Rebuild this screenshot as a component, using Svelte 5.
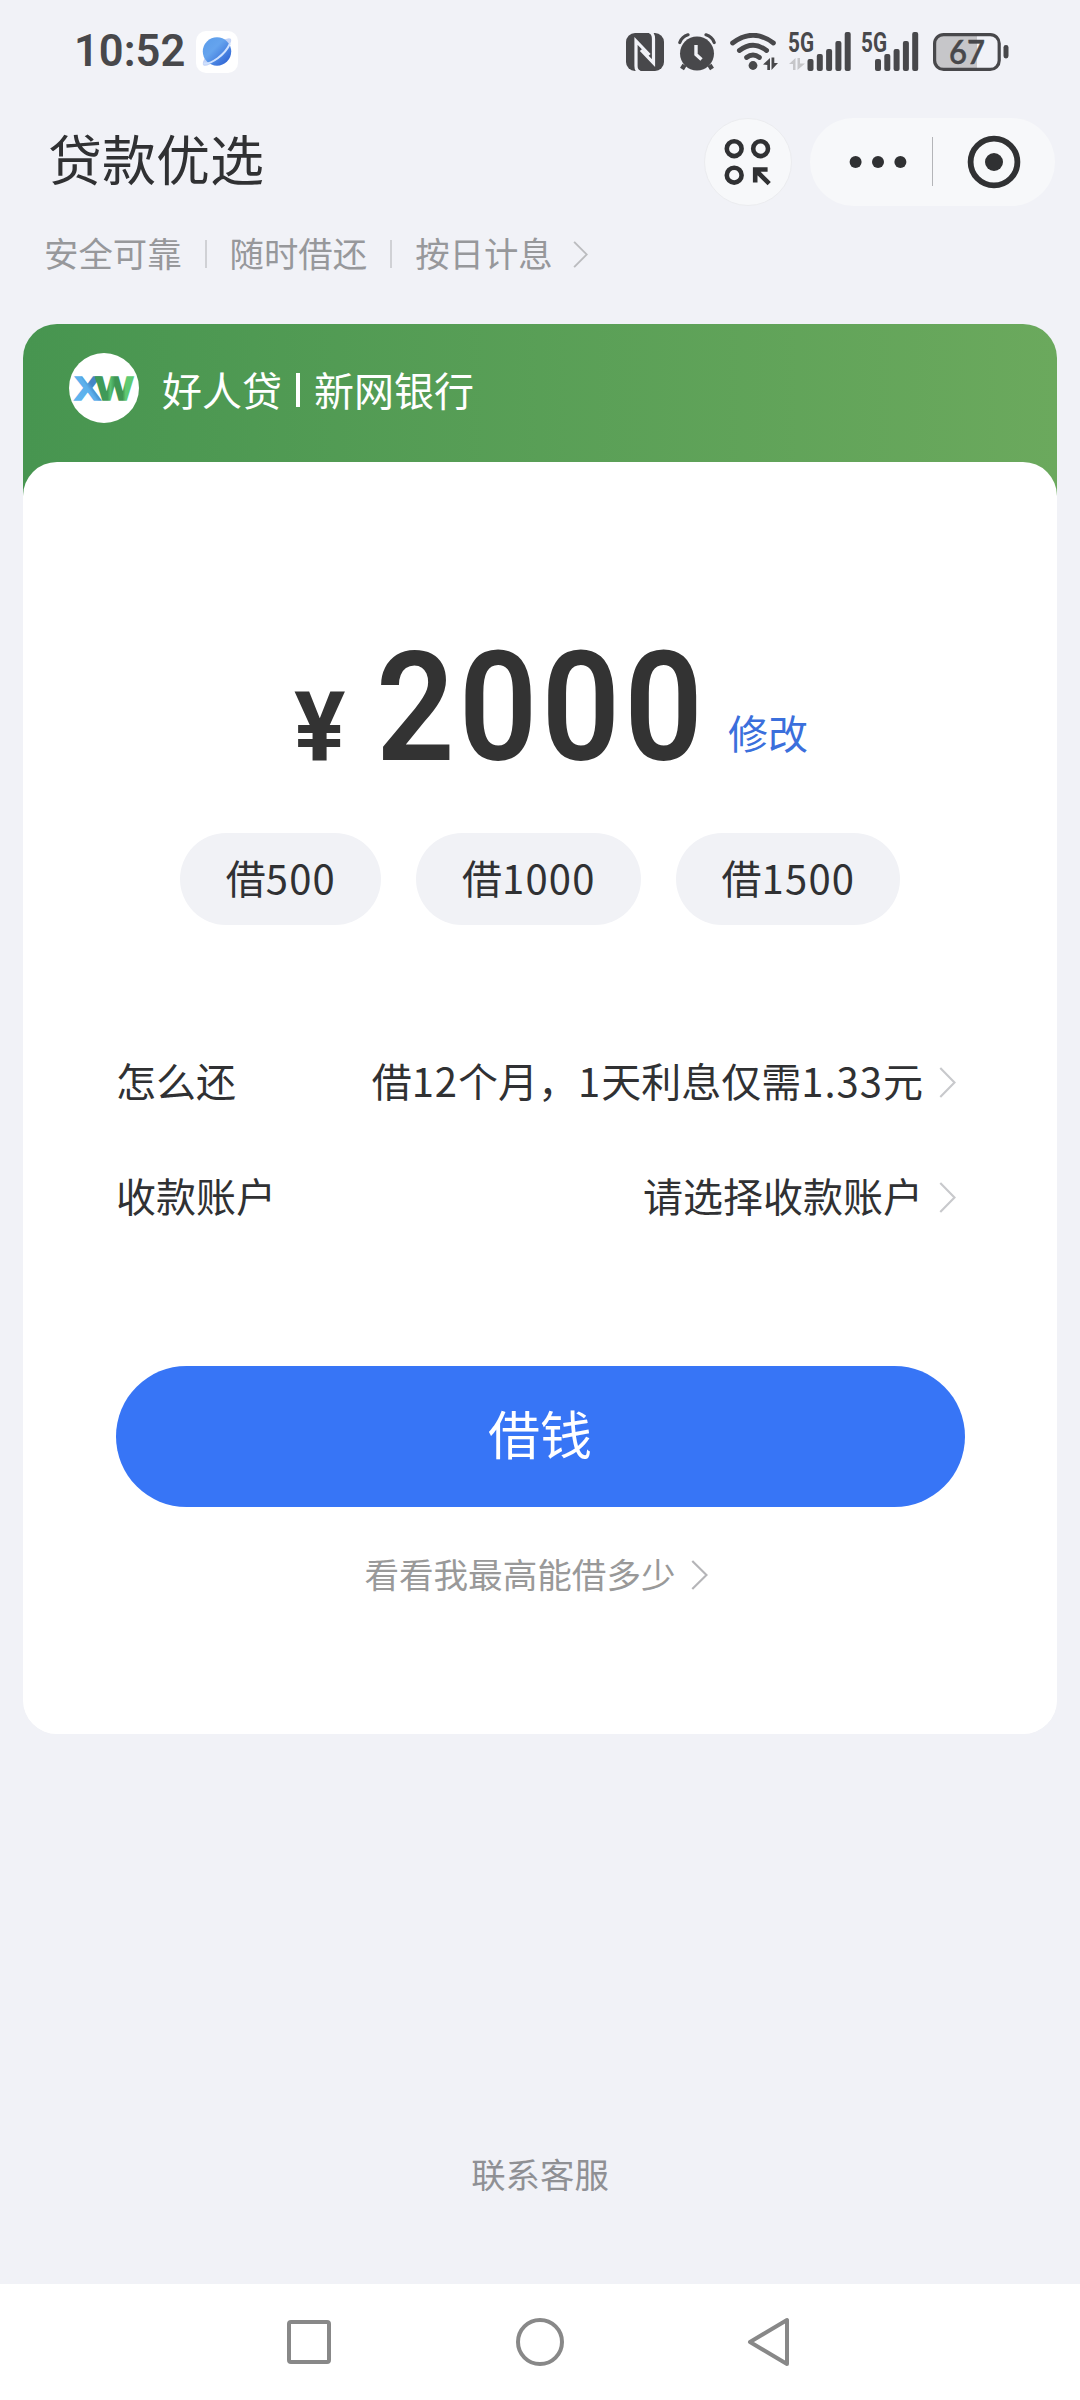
<script>
	const tags = ['安全可靠', '随时借还', '按日计息'];
	const presets = [500, 1000, 1500];
	const bars = [12, 17, 22, 30, 39];

	let amount = $state(2000);
</script>

{#snippet chevron(w, h)}
	<svg class="chevron" width={w} height={h} viewBox="0 0 16 30" preserveAspectRatio="none">
		<path d="M1.2 1 L14.6 15 L1.2 29" />
	</svg>
{/snippet}

{#snippet signal(data)}
	<svg class="signal" width={data ? 62 : 57} height="40" viewBox="0 0 {data ? 62 : 57} 40">
		<text x="-1" y="20" textLength="26" lengthAdjust="spacingAndGlyphs">5G</text>
		{#each bars as h, i}
			<rect x={(data ? 18.5 : 13) + i * 9.3} y={39 - h} width="6" height={h} rx="2" />
		{/each}
		{#if data}
			<path class="faint" d="M0 32 L6.5 26 V38 H4 V32 Z M8.5 26 H11 V31.5 H16 L8.5 38 Z" />
		{/if}
	</svg>
{/snippet}

<div class="screen">
	<div class="status">
		<span class="time">10:52</span>
		<svg class="browser" width="42" height="42" viewBox="0 0 42 42">
			<defs>
				<linearGradient id="globe" x1="0" y1="0" x2="1" y2="1">
					<stop offset="0" stop-color="#5a9bea" />
					<stop offset="0.4" stop-color="#65a4ee" />
					<stop offset="1" stop-color="#2457cf" />
				</linearGradient>
			</defs>
			<rect width="42" height="42" rx="10" fill="#fff" />
			<ellipse cx="21" cy="21" rx="19" ry="5.5" transform="rotate(-44 21 21)" fill="#c3d3f6" />
			<circle cx="21" cy="20.5" r="14.2" fill="url(#globe)" />
			<path d="M7.5 32.5 C15 33.5 29 24 34 12.5" fill="none" stroke="#cfe2ff" stroke-width="2" />
		</svg>

		<div class="icons">
			<svg class="nfc" width="38" height="38" viewBox="0 0 38 38">
				<rect width="38" height="38" rx="9" />
				<g fill="none" stroke="#f1f2f7" stroke-width="3.2">
					<path d="M14 39 Q10 38 10 33 V8 L23.5 22" />
					<path d="M23.5 -1 Q27.5 0 27.5 6 V30 L15 17" />
				</g>
			</svg>
			<svg class="alarm" width="38" height="38" viewBox="0 0 38 38">
				<circle cx="19" cy="20.5" r="17" />
				<path d="M6.5 32 L4 36 M31.5 32 L34 36" stroke="#48484b" stroke-width="4.6" />
				<path d="M1.8 9.5 Q4 3.5 10 1.8 M36.2 9.5 Q34 3.5 28 1.8" fill="none" stroke="#48484b" stroke-width="3.2" stroke-linecap="round" />
				<path d="M18 12 V21.5 L23.5 26.5" fill="none" stroke="#f1f2f7" stroke-width="3.4" />
			</svg>
			<svg class="wifi" width="48" height="38" viewBox="0 0 48 38">
				<g fill="none" stroke="#48484b" stroke-width="4.8" stroke-linecap="round">
					<path d="M2.6 10 Q23 -5.5 43.4 10" />
					<path d="M9.4 17.5 Q23 7 36.6 17.5" />
					<path d="M16.5 24.5 Q23 19.5 29.5 24.5" />
				</g>
				<circle cx="23" cy="32.5" r="4.4" />
				<path d="M33 31.5 L40 25 V37 H37.3 V32 Z M41.5 24.5 H44.3 V30 H48 L41.5 37 Z" />
			</svg>
			{@render signal(true)}
			{@render signal(false)}
			<svg class="battery" width="76" height="38" viewBox="0 0 76 38">
				<path d="M10 2 H44 V36 H10 Q2 36 2 28 V10 Q2 2 10 2 Z" fill="#c6c6c9" />
				<rect x="1.6" y="1.6" width="64.6" height="34.8" rx="9" fill="none" stroke="#48484b" stroke-width="3.2" />
				<rect x="70.5" y="12" width="5" height="13.5" rx="2.4" />
				<text x="16" y="30.5" textLength="36" lengthAdjust="spacingAndGlyphs">67</text>
			</svg>
		</div>
	</div>

	<header>
		<h1>贷款优选</h1>
		<button class="round" aria-label="apps">
			<svg width="48" height="48" viewBox="0 0 48 48">
				<g fill="none" stroke="#303133" stroke-width="4.6">
					<circle cx="10.2" cy="10.7" r="7.4" />
					<circle cx="36.6" cy="10.7" r="7.4" />
					<circle cx="10.2" cy="37.2" r="7.4" />
					<path d="M31.2 44.6 V31.5 H43.6 M31.6 32 L45.2 45.6" />
				</g>
			</svg>
		</button>
		<div class="capsule">
			<svg width="58" height="14" viewBox="0 0 58 14">
				<circle cx="6.6" cy="7" r="6" />
				<circle cx="29" cy="7" r="6" />
				<circle cx="51.4" cy="7" r="6" />
			</svg>
			<i></i>
			<svg width="54" height="54" viewBox="0 0 54 54">
				<circle cx="27" cy="27" r="23.4" fill="none" stroke="#303133" stroke-width="5.8" />
				<circle cx="27" cy="27" r="9" />
			</svg>
		</div>
	</header>

	<div class="tags">
		{#each tags as tag, i}
			{#if i > 0}<i></i>{/if}
			<span>{tag}</span>
		{/each}
		{@render chevron(15, 27)}
	</div>

	<main class="card">
		<div class="bank">
			<svg width="70" height="70" viewBox="0 0 70 70">
				<defs>
					<linearGradient id="x" x1="0" y1="1" x2="1" y2="0">
						<stop offset="0.2" stop-color="#5fb4ee" />
						<stop offset="0.5" stop-color="#5cb0ec" />
						<stop offset="0.62" stop-color="#4386c6" />
					</linearGradient>
					<linearGradient id="w">
						<stop offset="0" stop-color="#3f9a58" />
						<stop offset="0.3" stop-color="#3f9a58" />
						<stop offset="0.38" stop-color="#58c070" />
						<stop offset="0.5" stop-color="#3f9653" />
						<stop offset="0.7" stop-color="#3f9653" />
						<stop offset="0.78" stop-color="#5fca72" />
					</linearGradient>
				</defs>
				<circle cx="35" cy="35" r="35" fill="#fff" />
				<text class="logo" x="5.5" y="47" fill="url(#x)" stroke="url(#x)" textLength="26" lengthAdjust="spacingAndGlyphs">X</text>
				<text class="logo" x="27" y="47" fill="url(#w)" stroke="url(#w)" textLength="37" lengthAdjust="spacingAndGlyphs">W</text>
			</svg>
			<span>好人贷</span>
			<i></i>
			<span>新网银行</span>
		</div>

		<div class="panel">
			<div class="amount">
				<span class="yen">¥</span>
				<span class="value"><b>{amount}</b></span>
				<a href="#edit">修改</a>
			</div>

			<div class="presets">
				{#each presets as preset}
					<button onclick={() => (amount = preset)}>借<span class="num">{preset}</span></button>
				{/each}
			</div>

			<div class="row">
				<span>怎么还</span>
				<span class="detail">借<span class="num">12</span>个月，<span class="num">1</span>天利息仅需<span class="num">1.33</span>元</span>
				{@render chevron(17, 31)}
			</div>
			<div class="row">
				<span>收款账户</span>
				<span class="detail">请选择收款账户</span>
				{@render chevron(17, 31)}
			</div>

			<button class="submit">借钱</button>

			<div class="more">
				看看我最高能借多少
				{@render chevron(17, 30)}
			</div>
		</div>
	</main>

	<footer>联系客服</footer>

	<nav>
		<svg width="50" height="50" viewBox="0 0 50 50"><rect x="5" y="5" width="40" height="40" rx="2" /></svg>
		<svg width="50" height="50" viewBox="0 0 50 50"><circle cx="25" cy="25" r="22" /></svg>
		<svg width="50" height="50" viewBox="0 0 50 50"><path d="M41 3 V47 L4 25 Z" /></svg>
	</nav>
</div>

<style>
	:global(body) {
		background: #f1f2f7;
	}

	.screen {
		display: flex;
		flex-direction: column;
		width: 1080px;
		height: 2400px;
		overflow: hidden;
		background: #f1f2f7;
		color: #303133;
		font-family: 'Noto Sans CJK SC', sans-serif;
		font-size: 40px;
	}

	svg {
		display: block;
		flex: none;
	}

	button {
		border: none;
		padding: 0;
		font: inherit;
		color: inherit;
	}

	.status {
		display: flex;
		align-items: center;
		height: 103px;
		padding: 0 71px 0 74px;
		fill: #48484b;
	}

	.time {
		width: 122px;
		padding-top: 1px;
		font: 600 43.5px/50px Roboto, sans-serif;
		color: #48484b;
	}

	.icons {
		display: flex;
		align-items: center;
		margin-left: auto;
	}

	.alarm {
		margin-left: 14px;
	}

	.wifi {
		margin-left: 14px;
	}

	.signal {
		margin-left: 11px;
		overflow: visible;
	}

	.signal text {
		font: 700 27px/1 Roboto, sans-serif;
	}

	.signal .faint {
		fill: #c6c6c9;
	}

	.battery {
		margin-left: 14px;
		overflow: visible;
	}

	.battery text {
		font: 600 33px/1 Lato, sans-serif;
		stroke: #48484b;
		stroke-width: 0.4;
	}

	header {
		display: flex;
		align-items: center;
		height: 117px;
		padding: 0 25px 0 48px;
	}

	h1 {
		flex: 1;
		margin: 0;
		padding-bottom: 7px;
		font-size: 54px;
		font-weight: 400;
		line-height: 70px;
	}

	.round {
		display: flex;
		align-items: center;
		justify-content: center;
		box-sizing: border-box;
		width: 88px;
		height: 88px;
		margin-right: 18px;
		border: 1px solid #ebecef;
		border-radius: 50%;
		background: #f7f8fa;
	}

	.capsule {
		display: flex;
		align-items: center;
		box-sizing: border-box;
		width: 245px;
		height: 88px;
		padding-left: 39px;
		border-radius: 44px;
		background: #f7f8fa;
		fill: #303133;
	}

	.capsule i {
		width: 1px;
		height: 49px;
		margin: 0 34px 0 25px;
		background: #b4b5b8;
	}

	.tags {
		display: flex;
		align-items: center;
		height: 64px;
		padding-left: 44px;
		font-size: 34.4px;
		line-height: 50px;
		color: #97989b;
	}

	.tags i {
		width: 2px;
		height: 28px;
		margin: 4px 23px 0;
		background: #d0d1d5;
	}

	.chevron {
		fill: none;
		stroke: #c8c9cc;
		stroke-width: 2;
	}

	.tags .chevron {
		margin: 4px 0 0 20px;
		stroke: #bbbcbf;
	}

	.card {
		height: 1410px;
		margin: 40px 23px 0;
		border-radius: 34px;
		overflow: hidden;
		background: linear-gradient(90deg, #479550, #6ba95d) top / 100% 200px no-repeat #fff;
	}

	.bank {
		display: flex;
		align-items: center;
		box-sizing: border-box;
		height: 138px;
		padding: 0 0 10px 46px;
		color: #fff;
		line-height: 50px;
	}

	.bank span {
		padding-top: 2px;
	}

	.bank svg {
		margin-right: 23px;
	}

	.bank i {
		width: 4px;
		height: 34px;
		margin: 4px 14px 0 14px;
		background: #fff;
	}

	.logo {
		font: 700 34px/1 'Liberation Sans', sans-serif;
		stroke-width: 1.6;
	}

	.panel {
		height: 1272px;
		border-radius: 34px;
		background: #fff;
		overflow: hidden;
	}

	.amount {
		display: flex;
		align-items: baseline;
		height: 182px;
		margin-top: 156px;
		padding-left: 271px;
		font-family: Roboto, sans-serif;
		color: #333;
	}

	.yen {
		width: 82px;
		font-size: 96px;
		font-weight: 700;
		line-height: 180px;
	}

	.value {
		width: 352px;
		line-height: 180px;
	}

	.value b {
		display: inline-block;
		transform: scaleX(0.9);
		transform-origin: left;
		font-size: 153px;
		font-weight: 600;
		letter-spacing: 4.5px;
	}

	.amount a {
		align-self: flex-start;
		margin-top: 84px;
		font-family: 'Noto Sans CJK SC', sans-serif;
		line-height: 60px;
		color: #3b6fdc;
		text-decoration: none;
	}

	.presets {
		display: flex;
		justify-content: center;
		gap: 35px;
		margin: 33px 0 97px;
	}

	.presets button {
		height: 92px;
		padding: 0 45px 5px 46px;
		border-radius: 46px;
		background: #f1f2f6;
	}

	.num {
		letter-spacing: 1.2px;
	}

	.row {
		display: flex;
		align-items: center;
		height: 115px;
		padding: 0 101px 0 93px;
	}

	.detail {
		margin-left: auto;
	}

	.row .num {
		letter-spacing: 1px;
	}

	.row .chevron {
		margin: 5px 0 0 16px;
	}

	.submit {
		display: block;
		width: 849px;
		height: 141px;
		margin: 114px auto 0;
		padding-bottom: 8px;
		border-radius: 71px;
		background: #3775f6;
		color: #fff;
		font-size: 52px;
	}

	.more {
		display: flex;
		align-items: center;
		justify-content: center;
		gap: 15px;
		height: 60px;
		margin-top: 36px;
		padding-right: 8px;
		font-size: 34.6px;
		color: #999;
	}

	.more .chevron {
		margin-top: 4px;
		stroke: #b5b5b8;
	}

	footer {
		margin-top: auto;
		height: 136px;
		font-size: 34.4px;
		line-height: 50px;
		text-align: center;
		color: #8f9094;
	}

	nav {
		display: flex;
		align-items: center;
		justify-content: center;
		gap: 181px;
		height: 116px;
		background: #fff;
		fill: none;
		stroke: #888;
		stroke-width: 4;
		stroke-linejoin: round;
	}
</style>
